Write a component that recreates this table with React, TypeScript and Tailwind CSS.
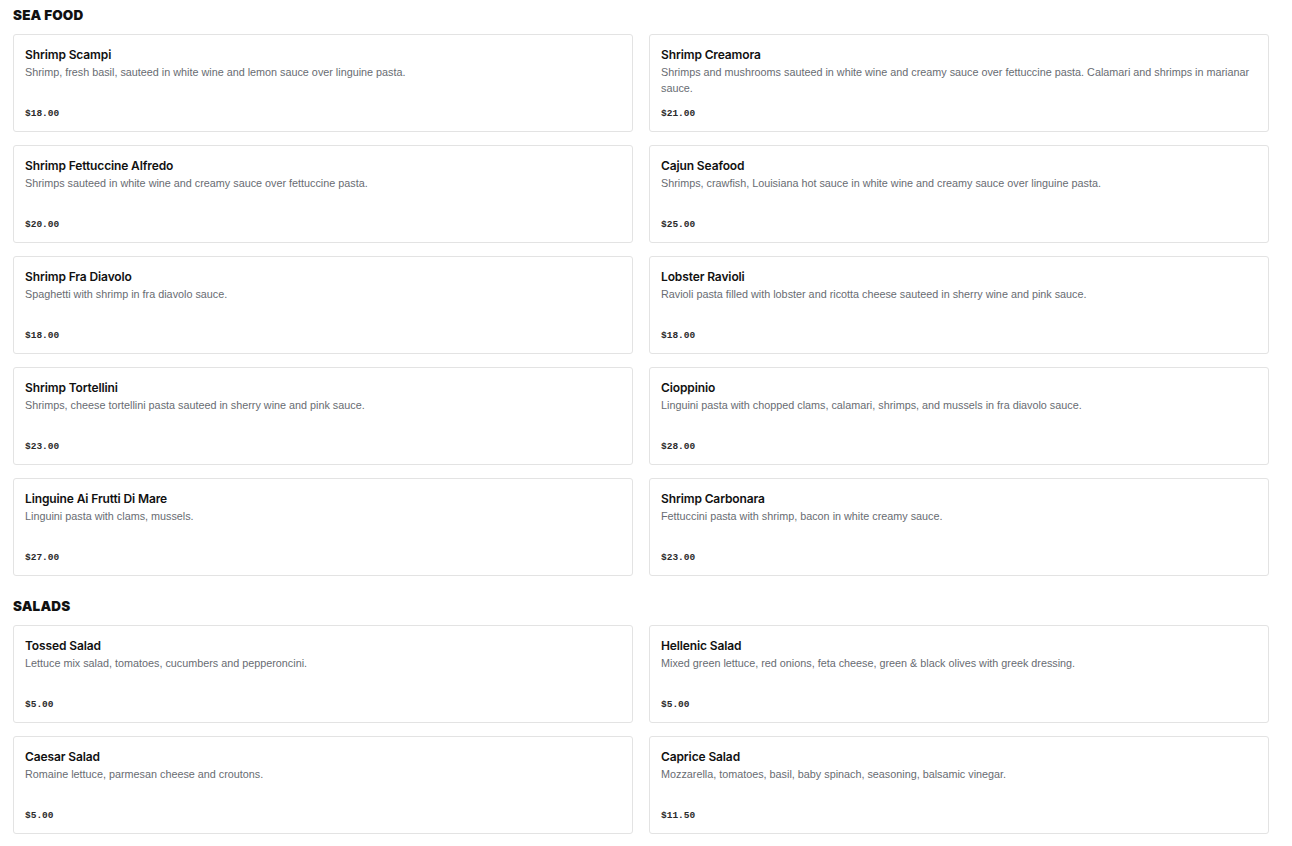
import React from "react";

type Item = { name: string; desc: string; price: string };

const seafood: Item[] = [
  { name: "Shrimp Scampi", desc: "Shrimp, fresh basil, sauteed in white wine and lemon sauce over linguine pasta.", price: "$18.00" },
  { name: "Shrimp Creamora", desc: "Shrimps and mushrooms sauteed in white wine and creamy sauce over fettuccine pasta. Calamari and shrimps in marianar sauce.", price: "$21.00" },
  { name: "Shrimp Fettuccine Alfredo", desc: "Shrimps sauteed in white wine and creamy sauce over fettuccine pasta.", price: "$20.00" },
  { name: "Cajun Seafood", desc: "Shrimps, crawfish, Louisiana hot sauce in white wine and creamy sauce over linguine pasta.", price: "$25.00" },
  { name: "Shrimp Fra Diavolo", desc: "Spaghetti with shrimp in fra diavolo sauce.", price: "$18.00" },
  { name: "Lobster Ravioli", desc: "Ravioli pasta filled with lobster and ricotta cheese sauteed in sherry wine and pink sauce.", price: "$18.00" },
  { name: "Shrimp Tortellini", desc: "Shrimps, cheese tortellini pasta sauteed in sherry wine and pink sauce.", price: "$23.00" },
  { name: "Cioppinio", desc: "Linguini pasta with chopped clams, calamari, shrimps, and mussels in fra diavolo sauce.", price: "$28.00" },
  { name: "Linguine Ai Frutti Di Mare", desc: "Linguini pasta with clams, mussels.", price: "$27.00" },
  { name: "Shrimp Carbonara", desc: "Fettuccini pasta with shrimp, bacon in white creamy sauce.", price: "$23.00" },
];

const salads: Item[] = [
  { name: "Tossed Salad", desc: "Lettuce mix salad, tomatoes, cucumbers and pepperoncini.", price: "$5.00" },
  { name: "Hellenic Salad", desc: "Mixed green lettuce, red onions, feta cheese, green & black olives with greek dressing.", price: "$5.00" },
  { name: "Caesar Salad", desc: "Romaine lettuce, parmesan cheese and croutons.", price: "$5.00" },
  { name: "Caprice Salad", desc: "Mozzarella, tomatoes, basil, baby spinach, seasoning, balsamic vinegar.", price: "$11.50" },
];

function Card({ item }: { item: Item }) {
  return (
    <div className="flex h-[98px] flex-col rounded-[3px] border border-[#e3e3e3] bg-white px-[11px] pt-[12px] pb-[11px]">
      <div className="text-[12px] leading-[16px] font-semibold tracking-[-0.01em] text-[#111] [font-family:Inter,'Noto_Sans',sans-serif]">
        {item.name}
      </div>
      <div className="mt-[1px] text-[10.8px] leading-[16px] text-[#686c72] [font-family:'Liberation_Sans',Arial,sans-serif]">
        {item.desc}
      </div>
      <div className="mt-auto text-[9.5px] leading-[12px] font-bold text-[#2a2a2a] [font-family:'Liberation_Mono',monospace]">
        {item.price}
      </div>
    </div>
  );
}

function Section({ title, items, first }: { title: string; items: Item[]; first?: boolean }) {
  return (
    <section className={first ? "" : "mt-[22px]"}>
      <h2 className="mb-[11px] text-[13.5px] leading-[16px] font-black tracking-[0.01em] text-[#111] [font-family:Inter,'Noto_Sans',sans-serif]">
        {title}
      </h2>
      <div className="grid w-[1256px] grid-cols-2 gap-x-[16px] gap-y-[13px]">
        {items.map((it) => (
          <Card key={it.name} item={it} />
        ))}
      </div>
    </section>
  );
}

export default function App() {
  return (
    <div className="min-h-[846px] bg-white pl-[13px] pt-[7px] pb-[12px]">
      <Section title="SEA FOOD" items={seafood} first />
      <Section title="SALADS" items={salads} />
    </div>
  );
}
